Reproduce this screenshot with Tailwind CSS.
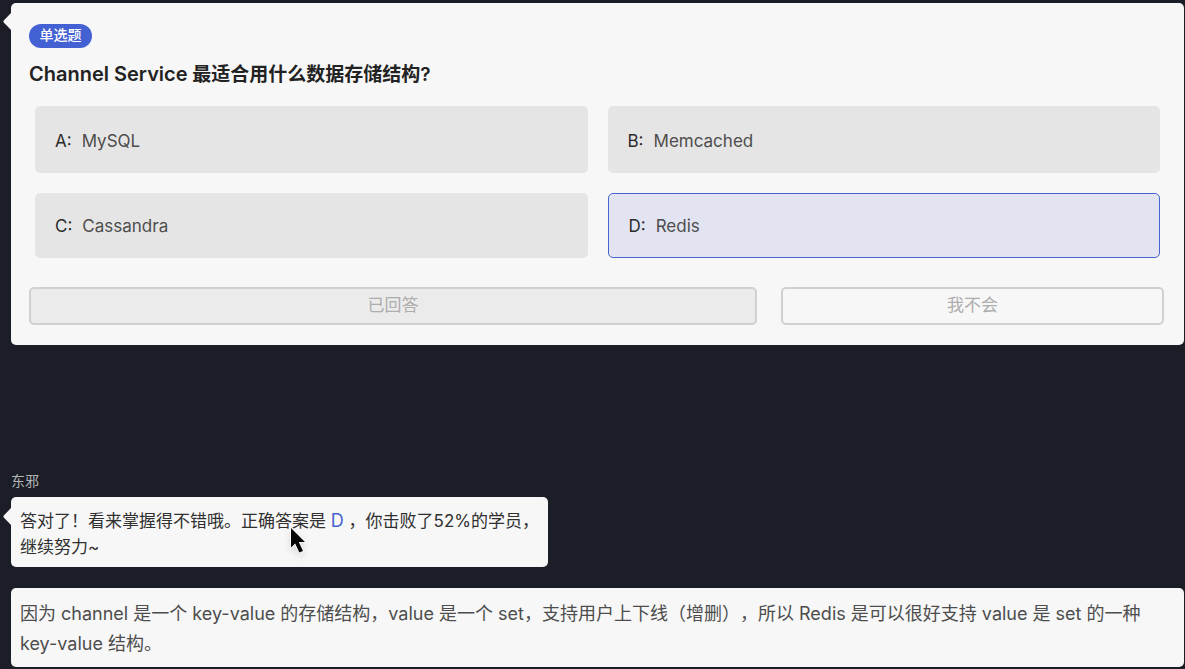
<!DOCTYPE html>
<html lang="zh-CN">
<head>
<meta charset="utf-8">
<meta name="viewport" content="width=device-width, initial-scale=1">
<title>单选题</title>
<script src="https://cdn.jsdelivr.net/npm/@tailwindcss/browser@4"></script>
</head>
<body class="min-h-screen bg-[#1b1e26] font-['Inter','Noto_Sans_CJK_SC',sans-serif] text-[#222] [text-spacing-trim:space-all]">
<main class="relative pt-[3px] pr-px pb-[2px] pl-[11px]">

  <form class="relative rounded-[5px] bg-[#f7f7f7] pt-[21px] pr-5 pb-5 pl-[18px]">
    <svg class="absolute top-[10px] -left-2 h-5 w-2" viewBox="0 0 8 20" aria-hidden="true"><path d="M8 0 .8 7.600Q0 8.500.8 9.400L8 17Z" fill="#f7f7f7"/></svg>
    <span class="flex h-6 w-[63px] items-center justify-center rounded-full bg-[#4361d2] pb-0.5 text-sm font-medium text-white">单选题</span>
    <fieldset class="mt-3">
      <legend class="text-[19px] leading-7 font-semibold"><span class="text-xl leading-7">Channel Service</span> 最适合用什么数据存储结构?</legend>
      <div class="mt-[17px] mr-1 ml-1.5 grid grid-cols-2 gap-5 text-[17px] text-[#4d4d4d]">
        <label class="flex h-[67px] items-center gap-2.5 rounded-[5px] bg-[#e5e5e5] px-5 pt-1"><input class="sr-only" type="radio" name="answer" value="A"><span class="text-[#2b2b2b]">A:</span>MySQL</label>
        <label class="flex h-[67px] items-center gap-2.5 rounded-[5px] bg-[#e5e5e5] px-5 pt-1"><input class="sr-only" type="radio" name="answer" value="B"><span class="text-[#2b2b2b]">B:</span>Memcached</label>
        <label class="flex h-[65px] items-center gap-2.5 rounded-[5px] bg-[#e5e5e5] px-5 pt-0.5"><input class="sr-only" type="radio" name="answer" value="C"><span class="text-[#2b2b2b]">C:</span>Cassandra</label>
        <label class="flex h-[65px] items-center gap-2.5 rounded-[5px] border border-[#4763cf] bg-[#e2e4f1] px-5 pt-0.5"><input class="sr-only" type="radio" name="answer" value="D" checked><span class="text-[#2b2b2b]">D:</span>Redis</label>
      </div>
    </fieldset>
    <div class="mt-[29px] grid grid-cols-[19fr_10fr] gap-6 text-[17px] text-[#adadad]">
      <button type="button" disabled class="h-[38px] rounded-[5px] border-2 border-[#d0d0d0] bg-[#ebebeb]">已回答</button>
      <button type="button" disabled class="h-[38px] rounded-[5px] border-2 border-[#d0d0d0] bg-[#f7f7f7]">我不会</button>
    </div>
  </form>

  <section class="mt-[126px]">
    <h2 class="text-sm leading-5 text-[#b4b5b8]">东邪</h2>
    <div class="relative mt-1.5 w-[537px] max-w-full rounded-[5px] bg-[#f7f7f7] pt-[11px] pr-1 pb-[7px] pl-[9px]">
      <svg class="absolute top-[11px] -left-2 h-5 w-2" viewBox="0 0 8 20" aria-hidden="true"><path d="M8 0 .8 7.600Q0 8.500.8 9.400L8 17Z" fill="#f7f7f7"/></svg>
      <p class="text-[17px] leading-[26px] text-[#303030]">答对了！看来掌握得不错哦。正确答案是 <span class="text-lg leading-none text-[#4763cf]">D</span> ，你击败了52%的学员，<br>继续努力~</p>
    </div>
    <p class="mt-[21px] rounded-[5px] bg-[#f7f7f7] pt-[11px] pr-2.5 pb-2 pl-[9px] text-lg leading-[30px] text-[#4d4d4d]">因为 channel 是一个 key-value 的存储结构，value 是一个 set，支持用户上下线（增删），所以 Redis 是可以很好支持 value 是 set 的一种 key-value 结构。</p>
  </section>

  <svg class="pointer-events-none absolute top-[524px] left-[284px] h-9 w-7 drop-shadow-md" viewBox="0 0 28 36" aria-hidden="true"><path d="M7 4V23.500L11.200 19.500 15.300 28.600 19 27 14.800 18H21Z" fill="#050505" stroke="#fff" stroke-width="1.500" stroke-linejoin="round" paint-order="stroke"/></svg>
</main>
</body>
</html>
